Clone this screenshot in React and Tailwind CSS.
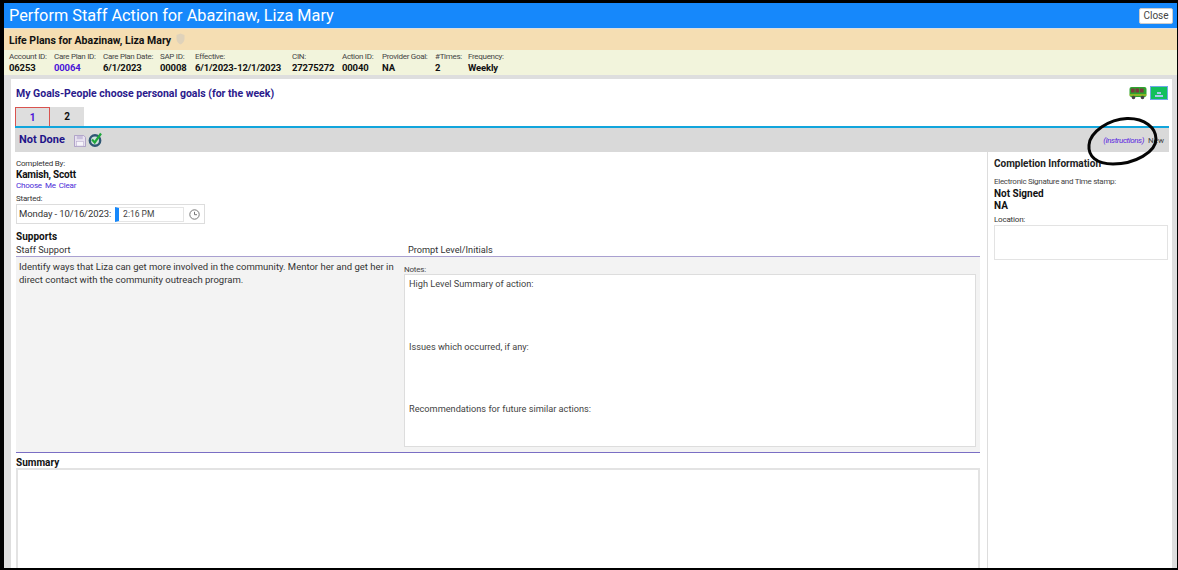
import React from "react";

const Meta = ({ label, value, w, blue }) => (
  <div className={`flex flex-col shrink-0 ${w}`}>
    <span className="text-[8px] tracking-[-0.3px] leading-[11px] text-[#444] whitespace-nowrap">{label}</span>
    <span className={`text-[9.5px] tracking-[-0.15px] leading-[12px] font-bold whitespace-nowrap ${blue ? "text-[#4a14d8]" : "text-[#111]"}`}>{value}</span>
  </div>
);

const Bus = () => (
  <svg width="18" height="14" viewBox="0 0 18 14">
    <rect x="0.5" y="1" width="17" height="10" rx="2" fill="#2fa32f" />
    <rect x="2" y="2.5" width="3.6" height="4" fill="#7a3b3b" />
    <rect x="6.5" y="2.5" width="3.6" height="4" fill="#7a3b3b" />
    <rect x="11" y="2.5" width="3.6" height="4" fill="#7a3b3b" />
    <rect x="0.5" y="8.5" width="17" height="1" fill="#e3c321" />
    <circle cx="4.5" cy="11.5" r="1.8" fill="#444" />
    <circle cx="13.5" cy="11.5" r="1.8" fill="#444" />
  </svg>
);

const GreenBox = () => (
  <div className="w-[18px] h-[14px] bg-[#12c05c] border border-[#6fa8e8] flex flex-col items-center justify-end pb-[2px] gap-[1px]">
    <div className="w-[4px] h-[2px] bg-[#a8c8f0]" />
    <div className="w-[8px] h-[2px] bg-[#a8c8f0]" />
  </div>
);

const Floppy = () => (
  <svg width="12" height="12" viewBox="0 0 13 13" className="block">
    <path d="M0.5 0.5H10.5L12.5 2.5V12.5H0.5Z" fill="#e8e2f0" stroke="#a99cc4" />
    <rect x="3" y="1" width="6.5" height="3.5" fill="#c9c0dc" />
    <rect x="2.5" y="7" width="8" height="5" fill="#f6f4fa" stroke="#b5a9cc" strokeWidth="0.6" />
  </svg>
);

const CheckCircle = () => (
  <svg width="14" height="15" viewBox="0 0 14 15" className="block">
    <circle cx="7" cy="8.5" r="5.2" fill="#cfe0dc" stroke="#2f5673" strokeWidth="2.4" />
    <path d="M4 7.5L6.7 10.5L13 1.5" fill="none" stroke="#1fa83c" strokeWidth="2.2" />
  </svg>
);

const Clock = () => (
  <svg width="11" height="11" viewBox="0 0 11 11" className="block">
    <circle cx="5.5" cy="5.5" r="4.7" fill="none" stroke="#777" strokeWidth="1" />
    <path d="M5.5 2.8V5.7H8" fill="none" stroke="#777" strokeWidth="1" />
  </svg>
);

export default function App() {
  return (
    <div className="relative w-[1178px] h-[570px] overflow-hidden bg-black pt-[3px] pl-[4px] pr-[1px] pb-[2px] font-['Roboto','Noto_Sans',sans-serif]">
      <div className="w-full h-full flex flex-col bg-[#dedede] overflow-hidden">
        <div className="h-[25px] shrink-0 bg-[#1688fb] flex items-center justify-between pl-[5px] pr-[4px]">
          <span className="text-[16.3px] leading-[25px] text-white whitespace-nowrap">Perform Staff Action for Abazinaw, Liza Mary</span>
          <button className="w-[34px] h-[16px] bg-white border border-[#ccc] rounded-[2px] text-[10px] leading-none text-[#444]">Close</button>
        </div>
        <div className="h-[21px] mt-[1px] shrink-0 bg-[#f5deb3] flex items-center pl-[5px] gap-[5px] pt-[2px]">
          <span className="text-[10.5px] font-bold text-[#111] whitespace-nowrap">Life Plans for Abazinaw, Liza Mary</span>
          <svg width="9" height="12" viewBox="0 0 9 12" className="-mt-[3px]"><path d="M4.5 0.5L8.5 2V6C8.5 9 6 10.8 4.5 11.5C3 10.8 0.5 9 0.5 6V2Z" fill="#dfd2ba" /></svg>
        </div>
        <div className="h-[25px] shrink-0 bg-[#f2f4dc] flex pl-[5px] pt-[1px]">
          <Meta label="Account ID:" value="06253" w="w-[45px]" />
          <Meta label="Care Plan ID:" value="00064" w="w-[49px]" blue />
          <Meta label="Care Plan Date:" value="6/1/2023" w="w-[57px]" />
          <Meta label="SAP ID:" value="00008" w="w-[35px]" />
          <Meta label="Effective:" value="6/1/2023-12/1/2023" w="w-[97px]" />
          <Meta label="CIN:" value="27275272" w="w-[50px]" />
          <Meta label="Action ID:" value="00040" w="w-[40px]" />
          <Meta label="Provider Goal:" value="NA" w="w-[53px]" />
          <Meta label="#Times:" value="2" w="w-[33px]" />
          <Meta label="Frequency:" value="Weekly" w="w-[50px]" />
        </div>
        <div className="flex-1 min-h-0 ml-[7px] mr-[5px] mt-[4px] bg-white flex flex-col pl-[4px] overflow-hidden">
          <div className="h-[28px] shrink-0 flex items-start justify-between pt-[7px] pr-[4px]">
            <span className="ml-[1px] mt-[1px] text-[10.5px] leading-[14px] font-bold text-[#2b1a8c] whitespace-nowrap">My Goals-People choose personal goals (for the week)</span>
            <div className="flex items-center gap-[3px]"><Bus /><GreenBox /></div>
          </div>
          <div className="h-[19px] shrink-0 flex">
            <div className="w-[35px] h-[19px] bg-[#dedede] border border-b-0 border-[#d9534f] text-[10px] font-bold text-[#4a14d8] flex items-center justify-center">1</div>
            <div className="w-[34px] h-[19px] bg-[#dedede] text-[10px] font-bold text-[#111] flex items-center justify-center">2</div>
          </div>
          <div className="h-[2px] shrink-0 bg-[#11a5dc] mr-[3px]" />
          <div className="h-[24px] shrink-0 bg-[#d9d9d9] mr-[3px] flex items-center justify-between pl-[4px] pr-[5px] pt-[1px]">
            <div className="flex items-center">
              <span className="text-[11px] font-bold text-[#1f1489] whitespace-nowrap">Not Done</span>
              <span className="ml-[9px]"><Floppy /></span>
              <span className="ml-[2px] -mt-[3px]"><CheckCircle /></span>
            </div>
            <div className="flex items-center gap-[4px] text-[8px] whitespace-nowrap">
              <span className="italic text-[#5a1fe0] tracking-[-0.4px]">(Instructions)</span>
              <span className="text-[#444]">New</span>
            </div>
          </div>
          <div className="flex-1 min-h-0 flex">
            <div className="w-[964px] ml-[1px] shrink-0 flex flex-col pt-[6px]">
              <div className="text-[8px] tracking-[-0.2px] leading-[11px] text-[#333]">Completed By:</div>
              <div className="text-[10px] tracking-[-0.2px] leading-[11px] font-bold text-[#111]">Kamish, Scott</div>
              <div className="flex gap-[3px] text-[8px] tracking-[-0.2px] leading-[11px] text-[#4a2ad8]">
                <span>Choose</span><span>Me</span><span>Clear</span>
              </div>
              <div className="mt-[3px] text-[8px] tracking-[-0.2px] leading-[10px] text-[#333]">Started:</div>
              <div className="w-[189px] h-[20px] border border-[#ddd] flex items-center pl-[2px]">
                <span className="text-[9.5px] tracking-[-0.1px] text-[#333] whitespace-nowrap">Monday - 10/16/2023:</span>
                <div className="ml-[4px] w-[69px] h-[15px] border border-[#e5e5e5] border-l-[4px] border-l-[#1688fb] flex items-center pl-[4px] text-[8.5px] text-[#444]">2:16 PM</div>
                <span className="ml-[5px]"><Clock /></span>
              </div>
              <div className="mt-[6px] text-[10px] leading-[14px] font-bold text-[#111]">Supports</div>
              <div className="h-[12px] flex items-center text-[9.2px] text-[#333]">
                <span className="w-[392px]">Staff Support</span>
                <span>Prompt Level/Initials</span>
              </div>
              <div className="h-[1px] bg-[#a9a0d0]" />
              <div className="h-[195px] shrink-0 flex">
                <div className="w-[388px] bg-[#f3f3f3] pl-[3px] pt-[3px] text-[9.5px] leading-[13px] text-[#333]">
                  Identify ways that Liza can get more involved in the community. Mentor her and get her in direct contact with the community outreach program.
                </div>
                <div className="flex-1 bg-[#f3f3f3] pt-[8px] pr-[4px] pb-[5px] flex flex-col">
                  <div className="text-[8px] tracking-[-0.2px] leading-[9px] text-[#444]">Notes:</div>
                  <div className="flex-1 bg-white border border-[#ddd] pl-[4px] pt-[2px] text-[9.2px] leading-[13px] text-[#444]">
                    <div className="h-[62.5px]">High Level Summary of action:</div>
                    <div className="h-[62.5px]">Issues which occurred, if any:</div>
                    <div>Recommendations for future similar actions:</div>
                  </div>
                </div>
              </div>
              <div className="h-[1px] bg-[#7a6ec4]" />
              <div className="mt-[4px] text-[10px] leading-[11px] font-bold text-[#111]">Summary</div>
              <div className="flex-1 border-2 border-[#e3e3e3] border-b-0" />
            </div>
            <div className="ml-[7px] flex-1 border-l border-[#ddd] pl-[6px] pt-[5px] pr-[4px] flex flex-col">
              <div className="text-[10px] leading-[14px] font-bold text-[#222] whitespace-nowrap">Completion Information</div>
              <div className="mt-[5px] text-[8px] tracking-[-0.3px] leading-[11px] text-[#444] whitespace-nowrap">Electronic Signature and Time stamp:</div>
              <div className="text-[10px] leading-[12px] mt-[1px] font-bold text-[#111]">Not Signed</div>
              <div className="text-[10px] leading-[12px] font-bold text-[#111]">NA</div>
              <div className="mt-[3px] text-[8px] tracking-[-0.2px] leading-[10px] text-[#333]">Location:</div>
              <div className="h-[35px] border border-[#e3e3e3]" />
            </div>
          </div>
        </div>
      </div>
      <svg className="absolute left-[1085px] top-[115px]" width="76" height="54" viewBox="0 0 76 54">
        <path d="M4 30C5 17 24 4 42 3.5C60 3 71 13 71 24C71 37 50 49 28 49C11 49 3 41 4 30Z" fill="none" stroke="#050505" strokeWidth="3" />
      </svg>
    </div>
  );
}
